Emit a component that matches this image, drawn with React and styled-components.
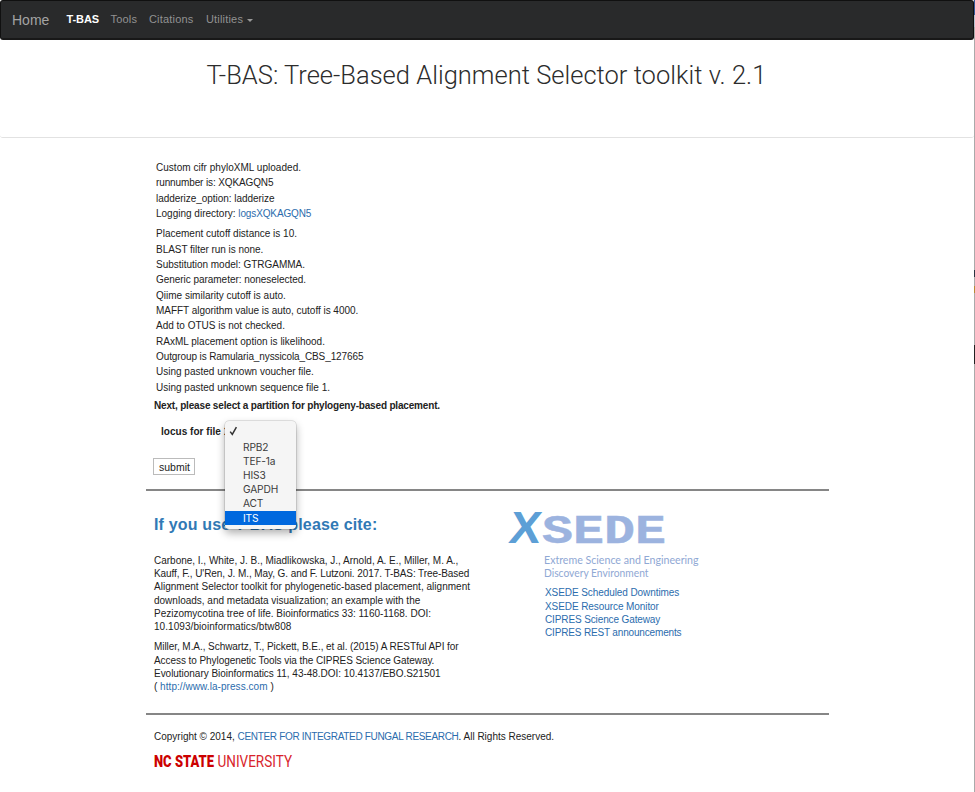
import React from "react";
import styled, { createGlobalStyle } from "styled-components";

const GlobalStyle = createGlobalStyle`
  * { box-sizing: border-box; }
  body {
    margin: 0;
    background: #fff;
    color: #222;
    font: 10px/15.33px "Liberation Sans", Arial, sans-serif;
    overflow: hidden;
  }
`;

const Page = styled.div`
  height: 792px;
  display: grid;
  grid-template-columns: 974px 1px;
`;

const WindowEdge = styled.div`
  background: linear-gradient(
    #33589a 0 15px, #b5bfce 15px 27px, #aaa 27px 270px, #293542 270px 277px,
    #aaa 277px 286px, #b78a35 286px 293px, #aaa 293px 345px, #222 345px 364px, #aaa 364px
  );
`;

const Navbar = styled.nav`
  height: 40px;
  padding: 0 0 2px 11px;
  display: flex;
  align-items: center;
  background: #292a2b;
  border: 1px solid #101010;
  border-bottom: 2px solid #181818;
  border-radius: 3px;
`;

const Brand = styled.a`
  width: 54.5px;
  padding-top: 2px;
  font-size: 14px;
  line-height: 20px;
  color: #a4a4a4;
`;

const NavItem = styled.a`
  width: ${(p) => p.$w}px;
  display: flex;
  align-items: center;
  white-space: nowrap;
  font-size: 11px;
  line-height: 16px;
  font-weight: ${(p) => (p.$active ? 700 : 400)};
  color: ${(p) => (p.$active ? "#fff" : "#929292")};
  letter-spacing: ${(p) => p.$track || 0}px;
`;

const Caret = styled.span`
  margin: 3px 0 0 4px;
  border: 3px solid transparent;
  border-top-color: #999;
  border-bottom: 0;
`;

const Header = styled.header`
  height: 98px;
  padding-top: 17px;
  border-bottom: 1px solid #e2e2e2;
  border-radius: 3px;
`;

const Title = styled.h1`
  margin: 0 0 0 206.5px;
  font: 300 25.5px/36px Roboto, sans-serif;
  letter-spacing: ${(p) => p.$track}px;
  color: #2c2c2c;
  white-space: nowrap;
`;

const Content = styled.main`
  width: 683px;
  margin-left: 146px;
`;

const Log = styled.div`
  padding: 22px 0 0 10px;
`;

const LogGroup = styled.div`
  margin-bottom: ${(p) => p.$gap}px;
`;

const Line = styled.div`
  white-space: nowrap;
  letter-spacing: ${(p) => p.$track || 0}px;
`;

const Link = styled.a`
  color: #2b6cad;
  letter-spacing: ${(p) => (p.$track === undefined ? "inherit" : `${p.$track}px`)};
`;

const Prompt = styled.p`
  margin: 3px 0 0 8px;
  font-weight: 700;
  letter-spacing: ${(p) => p.$track}px;
`;

const LocusRow = styled.div`
  position: relative;
  margin: 11px 0 0 15px;
  font-weight: 700;
  letter-spacing: ${(p) => p.$track}px;
`;

const Menu = styled.div`
  position: absolute;
  z-index: 2;
  left: 64px;
  top: -3.3px;
  width: 71px;
  height: 108px;
  padding-top: 4.5px;
  background: #f5f5f5;
  border-radius: 4px;
  box-shadow: 0 0 0 0.5px rgba(0, 0, 0, 0.2), 0 4px 9px rgba(0, 0, 0, 0.32);
`;

const CheckRow = styled.div`
  height: 14.6px;
  padding: 1px 0 0 4px;
`;

const Option = styled.div`
  height: 14.1px;
  padding-left: 18px;
  font: 400 10.2px/14.1px Inter, sans-serif;
  letter-spacing: -0.15px;
  color: ${(p) => (p.$selected ? "#fff" : "#3c3c3c")};
  background: ${(p) => (p.$selected ? "#0068de" : "transparent")};
`;

const SubmitButton = styled.button`
  display: block;
  width: 42px;
  height: 17px;
  margin: 18.8px 0 13.9px 7px;
  padding: 1px 0 0 1px;
  background: #fff;
  border: 1px solid #bbb;
  color: #222;
  font: 10.5px/14px "Liberation Sans", Arial, sans-serif;
`;

const Rule = styled.div`
  height: 2px;
  background: #868686;
`;

const Columns = styled.section`
  height: 222px;
  display: grid;
  grid-template-columns: 354px 1fr;
`;

const CiteColumn = styled.div`
  padding: 23px 0 0 8px;
`;

const CiteHeading = styled.h2`
  margin: 0 0 17.5px;
  font-size: 16px;
  line-height: 22px;
  color: #3179b5;
  letter-spacing: ${(p) => p.$track}px;
`;

const Citation = styled.div`
  line-height: 13.3px;
  margin-bottom: 6.8px;
`;

const XsedeColumn = styled.div`
  padding-top: 16px;
`;

const XsedeLinks = styled.div`
  padding: 1px 0 0 45px;
  line-height: 13.3px;
`;

const Footer = styled.footer`
  padding: 14px 0 0 8px;
`;

const NcStateRow = styled.div`
  padding-top: 4px;
`;

const SvgBlock = styled.svg`
  display: block;
  overflow: visible;
`;

const settings = [
  ["Placement cutoff distance is 10."],
  ["BLAST filter run is none.", -0.04],
  ["Substitution model: GTRGAMMA.", -0.02],
  ["Generic parameter: noneselected.", -0.04],
  ["Qiime similarity cutoff is auto."],
  ["MAFFT algorithm value is auto, cutoff is 4000.", -0.03],
  ["Add to OTUS is not checked."],
  ["RAxML placement option is likelihood.", 0.01],
  ["Outgroup is Ramularia_nyssicola_CBS_127665", -0.105],
  ["Using pasted unknown voucher file."],
  ["Using pasted unknown sequence file 1."],
];

const carbone = [
  ["Carbone, I., White, J. B., Miadlikowska, J., Arnold, A. E., Miller, M. A.,", -0.01],
  ["Kauff, F., U'Ren, J. M., May, G. and F. Lutzoni. 2017. T-BAS: Tree-Based", -0.08],
  ["Alignment Selector toolkit for phylogenetic-based placement, alignment", 0.02],
  ["downloads, and metadata visualization; an example with the"],
  ["Pezizomycotina tree of life. Bioinformatics 33: 1160-1168. DOI:"],
  ["10.1093/bioinformatics/btw808", 0.06],
];

const miller = [
  ["Miller, M.A., Schwartz, T., Pickett, B.E., et al. (2015) A RESTful API for", -0.065],
  ["Access to Phylogenetic Tools via the CIPRES Science Gateway.", -0.065],
  ["Evolutionary Bioinformatics 11, 43-48.DOI: 10.4137/EBO.S21501", -0.03],
];

const resources = [
  ["XSEDE Scheduled Downtimes", -0.08],
  ["XSEDE Resource Monitor", -0.08],
  ["CIPRES Science Gateway", -0.12],
  ["CIPRES REST announcements", -0.16],
];

const Lines = ({ items, as: Wrapper = React.Fragment }) =>
  items.map(([text, track]) => (
    <Line key={text} $track={track}><Wrapper>{text}</Wrapper></Line>
  ));

const XsedeLogo = () => (
  <SvgBlock width="210" height="78" viewBox="0 0 210 78">
    <text transform="translate(7.8 36.3) skewX(-8)" textLength="31.5" lengthAdjust="spacingAndGlyphs" fontFamily="Liberation Sans" fontWeight="700" fontSize="45" fill="#5d9fd6">X</text>
    <text x="42" y="36.3" textLength="124" lengthAdjust="spacingAndGlyphs" fontFamily="Liberation Mono" fontWeight="700" fontSize="41" fill="#9cb3df" stroke="#9cb3df" strokeWidth="0.4">SEDE</text>
    <text x="44" y="57" textLength="154.5" lengthAdjust="spacingAndGlyphs" fontFamily="Lato" fontSize="11.2" fill="#8fa8d4">Extreme Science and Engineering</text>
    <text x="44" y="69.5" textLength="104.5" lengthAdjust="spacingAndGlyphs" fontFamily="Lato" fontSize="11.2" fill="#8fa8d4">Discovery Environment</text>
  </SvgBlock>
);

const NcStateLogo = () => (
  <SvgBlock width="140" height="24" viewBox="0 0 140 24">
    <text x="0" y="18" textLength="60" lengthAdjust="spacingAndGlyphs" fontFamily="Roboto" fontWeight="900" fontSize="16" fill="#cc0000">NC STATE</text>
    <text x="63.5" y="18" textLength="74.5" lengthAdjust="spacingAndGlyphs" fontFamily="Roboto" fontWeight="400" fontSize="16" fill="#d8232a">UNIVERSITY</text>
  </SvgBlock>
);

const CheckMark = () => (
  <SvgBlock width="9" height="10" viewBox="0 0 9 10">
    <path d="M1.2 5.6 L3.3 8.4 L7.4 1.2" fill="none" stroke="#333" strokeWidth="1.5" />
  </SvgBlock>
);

export default function App() {
  return (
    <>
      <GlobalStyle />
      <Page>
        <div>
          <Navbar>
            <Brand>Home</Brand>
            <NavItem $active $w={44} $track={-0.1}>T-BAS</NavItem>
            <NavItem $w={38.5} $track={0.2}>Tools</NavItem>
            <NavItem $w={57} $track={0.18}>Citations</NavItem>
            <NavItem $w={60} $track={0.18}>Utilities<Caret /></NavItem>
          </Navbar>
          <Header>
            <Title $track={0.01}>T-BAS: Tree-Based Alignment Selector toolkit v. 2.1</Title>
          </Header>
          <Content>
            <Log>
              <LogGroup $gap={5}>
                <Line $track={0.03}>Custom cifr phyloXML uploaded.</Line>
                <Line $track={-0.12}>runnumber is: XQKAGQN5</Line>
                <Line $track={-0.04}>ladderize_option: ladderize</Line>
                <Line>Logging directory: <Link $track={-0.12}>logsXQKAGQN5</Link></Line>
              </LogGroup>
              <LogGroup $gap={0}><Lines items={settings} /></LogGroup>
            </Log>
            <Prompt $track={-0.175}>Next, please select a partition for phylogeny-based placement.</Prompt>
            <LocusRow $track={0.03}>
              locus for file 1
              <Menu>
                <CheckRow><CheckMark /></CheckRow>
                {["RPB2", "TEF-1a", "HIS3", "GAPDH", "ACT", "ITS"].map((name) => (
                  <Option key={name} $selected={name === "ITS"}>{name}</Option>
                ))}
              </Menu>
            </LocusRow>
            <SubmitButton>submit</SubmitButton>
            <Rule />
            <Columns>
              <CiteColumn>
                <CiteHeading $track={0.16}>If you use T-BAS please cite:</CiteHeading>
                <Citation><Lines items={carbone} /></Citation>
                <Citation>
                  <Lines items={miller} />
                  <Line>( <Link $track={0.06}>http://www.la-press.com</Link> )</Line>
                </Citation>
              </CiteColumn>
              <XsedeColumn>
                <XsedeLogo />
                <XsedeLinks><Lines items={resources} as={Link} /></XsedeLinks>
              </XsedeColumn>
            </Columns>
            <Rule />
            <Footer>
              <Line>Copyright © 2014, <Link $track={-0.32}>CENTER FOR INTEGRATED FUNGAL RESEARCH</Link>. All Rights Reserved.</Line>
              <NcStateRow><NcStateLogo /></NcStateRow>
            </Footer>
          </Content>
        </div>
        <WindowEdge />
      </Page>
    </>
  );
}
